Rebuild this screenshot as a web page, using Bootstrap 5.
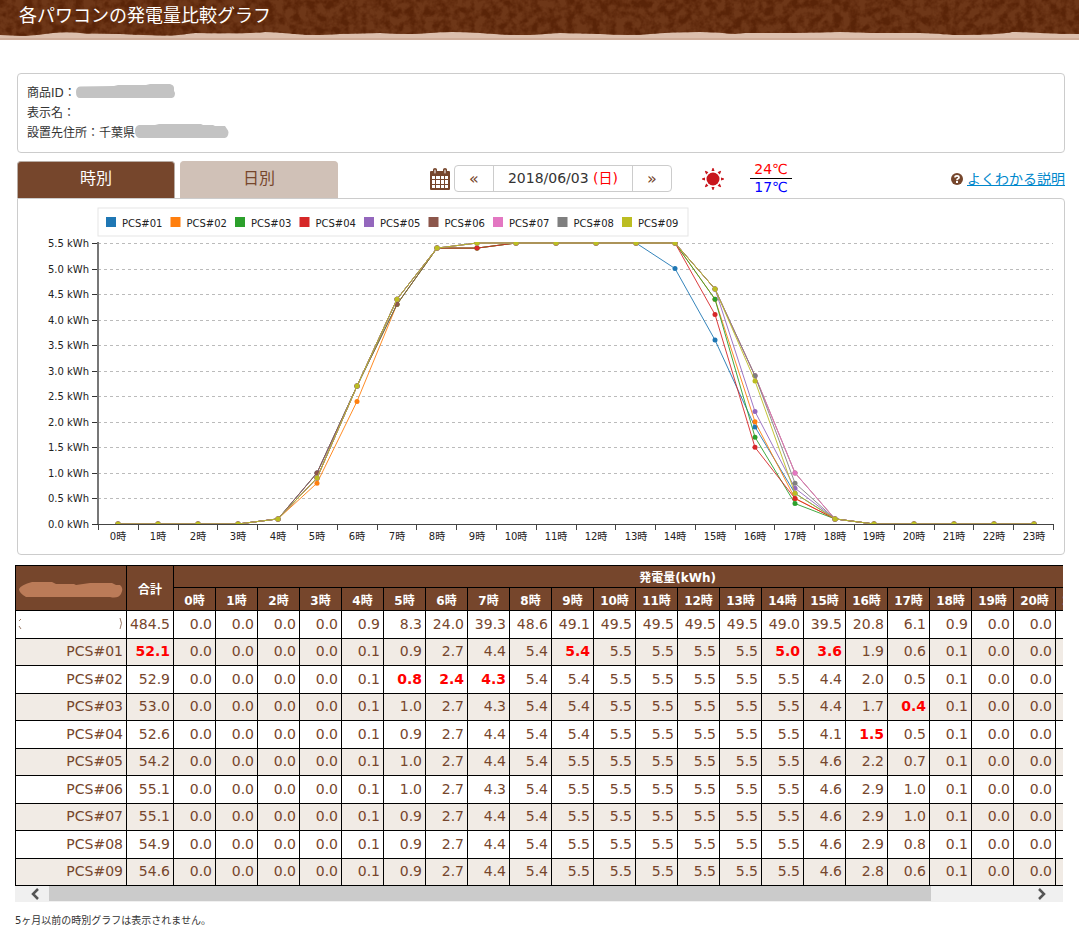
<!DOCTYPE html>
<html lang="ja">
<head>
<meta charset="utf-8">
<meta name="viewport" content="width=device-width, initial-scale=1">
<title>各パワコンの発電量比較グラフ</title>
<link href="https://cdn.jsdelivr.net/npm/bootstrap@5.3.0/dist/css/bootstrap.min.css" rel="stylesheet">
<style>
:root { --brown: #76462c; --line: #ccc; }
body { font-family: "DejaVu Sans", "Noto Sans CJK JP", sans-serif; font-size: 12px; line-height: 20px; color: #333; }
.page-head { height: 40px; }
.page-head svg { inset: 0; }
.page-head h1 { font-size: 18px; line-height: 32px; font-weight: 400; padding-left: 19px; }
.page-main { padding: 33px 14px 0 17px; }
.info-box { border: 1px solid var(--line); border-radius: 4px; padding: 9px 9px; }
.info-box dt { font-weight: 400; }
.hidden-value { height: 16px; }
.toolbar { margin-top: 8px; height: 37px; }
.tabs { gap: 5px; }
.tabs button { width: 158px; font-size: 16px; line-height: 32px; border: 1px solid #d0c1b7; border-bottom: 0; border-radius: 4px 4px 0 0; background: #d0c1b7; color: var(--brown); padding: 0 0 2px; }
.tabs button.active { background: var(--brown); border-color: #b8aca4; color: #fff; }
.period { margin-left: 92px; }
.period, .help-link { padding-bottom: 2px; }
.day-nav { border: 1px solid var(--line); border-radius: 4px; height: 27px; margin-left: 4px; font-size: 14px; line-height: 25px; }
.day-nav button { width: 38px; border: 0; background: none; color: var(--brown); padding: 0; font-size: 16px; line-height: 22px; }
.day-nav .day { width: 140px; border: solid var(--line); border-width: 0 1px; text-align: center; }
.holiday { color: #f00; }
.temps { width: 42px; margin-left: 20px; font-size: 14px; line-height: 17px; text-align: center; }
.temps .hi { color: #f00; border-bottom: 1px solid #000; }
.temps .lo { color: #00f; }
.help { color: #0088cc; font-size: 14px; }
.chart-box { border: 1px solid var(--line); border-radius: 0 4px 4px 4px; }
.chart-box svg { width: 100%; height: auto; }
.chart-box text { font-size: 10px; fill: #222; }
.sheet { margin: 10px 2px 0 -2px; }
.sheet-view { overflow-x: auto; overflow-y: hidden; scrollbar-width: none; }
.sheet-view::-webkit-scrollbar { display: none; }
.power { table-layout: fixed; width: 1167px; border-collapse: collapse; color: var(--brown); }
.power th, .power td { border: 1px solid #000; }
.power thead th { background: var(--brown); color: #fff; text-align: center; font-size: 12px; line-height: 18px; padding: 3px 0 0; height: 22px; }
.power thead tr + tr th { height: 23px; padding-top: 4px; line-height: 18px; }
.power tbody tr { height: 28px; }
.power tbody tr:nth-child(even) { height: 27px; background: #f1ebe5; }
.power tbody th, .power tbody td { font-size: 14px; line-height: 22px; font-weight: 400; text-align: right; padding: 0 3px 2px 0; white-space: nowrap; }
.power tbody td.low { color: #f00; font-weight: 700; }
.power tbody td + td { padding-right: 3px; }
.scroller { height: 16px; background: #f0f0f0; }
.scroller button { width: 34px; border: 0; background: none; padding: 0; line-height: 0; }
.track { height: 15px; }
.thumb { width: 90%; background: #cbcbcb; }
.note { font-size: 10px; line-height: 16px; margin: 11px 0 0 -2px; }
</style>
</head>
<body>
<header class="page-head position-relative">
  <svg class="position-absolute w-100 h-100" viewBox="0 0 1079 40" preserveAspectRatio="none" aria-hidden="true">
    <defs>
      <filter id="grain" x="0" y="0" width="100%" height="100%" color-interpolation-filters="sRGB">
        <feTurbulence type="fractalNoise" baseFrequency="0.12" numOctaves="3" seed="4"/>
        <feColorMatrix values="0 0 0 0 .35  0 0 0 0 .14  0 0 0 0 .03  3 0 0 0 -1.1"/>
        <feComposite in2="SourceGraphic" operator="in" result="spots"/>
        <feMerge><feMergeNode in="SourceGraphic"/><feMergeNode in="spots"/></feMerge>
      </filter>
    </defs>
    <rect width="1079" height="40" fill="#dcbfad"/>
    <rect y="38" width="1079" height="2" fill="#d0ae9a"/>
    <path filter="url(#grain)" fill="#6e3718" d="M0 0H1079V34Q1060 34 1040 33T1012 32Q1000 35 955 35Q930 33 920 33H870Q850 32 840 32T795 33H745L735 34Q715 32 700 32Q670 32 650 34T600 34L560 33L530 35Q500 35 480 33Q450 31 430 33T380 33L340 34Q315 36 295 34T265 32Q245 34 195 33Q175 36 160 35.500T120 34L85 33.500Q62 31 45 34T0 35Z"/>
  </svg>
  <h1 class="position-relative text-white m-0">各パワコンの発電量比較グラフ</h1>
</header>

<main class="page-main">
  <dl class="info-box m-0">
    <div class="d-flex"><dt>商品ID：</dt><dd class="m-0"><svg class="hidden-value d-block" width="100" height="16" viewBox="0 0 100 16" aria-label="非表示"><path fill="#c3c3c3" d="M4 3.500L38 3L42 2L70 2L74 1H94Q98 2 98 5V8Q100 10 98 14L96 15H4Q0 15 0 9Q0 4 4 3.500Z"/></svg></dd></div>
    <div class="d-flex"><dt>表示名：</dt><dd class="m-0"></dd></div>
    <div class="d-flex"><dt>設置先住所：</dt><dd class="m-0 d-flex">千葉県<svg class="hidden-value d-block" width="94" height="16" viewBox="0 0 94 16" aria-label="非表示"><path fill="#c3c3c3" d="M4 2H20L24 1H66L68 2H78L80 3H90L92 6Q95 9 92 14L90 15H4Q0 14 0 8Q0 3 4 2Z"/></svg></dd></div>
  </dl>

  <div class="toolbar d-flex">
    <div class="tabs d-flex" role="tablist">
      <button type="button" class="active" role="tab" aria-selected="true">時別</button>
      <button type="button" role="tab" aria-selected="false">日別</button>
    </div>
    <div class="period d-flex align-items-center">
      <svg width="20" height="22" viewBox="0 0 20 22" aria-hidden="true">
        <path fill="#76462c" d="M1 3H3V1.500Q3 0 5 0T7 1.500V3H13V1.500Q13 0 15 0T17 1.500V3H19Q20 3 20 4V21Q20 22 19 22H1Q0 22 0 21V4Q0 3 1 3Z"/>
        <path fill="#fff" d="M4.500 2Q5 1 5.500 2V5Q5 6 4.500 5ZM14.500 2Q15 1 15.500 2V5Q15 6 14.500 5ZM2 8H5V11H2ZM6 8H10V11H6ZM11 8H14V11H11ZM15 8H18V11H15ZM2 12H5V16H2ZM6 12H10V16H6ZM11 12H14V16H11ZM15 12H18V16H15ZM2 17H5V20H2ZM6 17H10V20H6ZM11 17H14V20H11ZM15 17H18V20H15Z"/>
      </svg>
      <div class="day-nav d-flex">
        <button type="button" aria-label="前の日">«</button>
        <div class="day">2018/06/03 <span class="holiday">(日)</span></div>
        <button type="button" aria-label="次の日">»</button>
      </div>
      <svg id="sun" class="ms-4" width="34" height="24" viewBox="-17 -12 34 24" role="img" aria-label="晴れ"><g fill="#c8161d"><circle r="6.500"/></g></svg>
      <div class="temps"><div class="hi">24℃</div><div class="lo">17℃</div></div>
    </div>
    <div class="help-link ms-auto d-flex align-items-center gap-1">
      <svg width="12" height="12" viewBox="0 0 12 12" aria-hidden="true"><circle cx="6" cy="6" r="6" fill="#76462c"/><path d="M4 4.500Q4 2.800 6 2.800T8 4.400Q8 5.300 6.900 5.800Q6 6.200 6 7.200" fill="none" stroke="#fff" stroke-width="1.700"/><rect x="5" y="8" width="2" height="2" fill="#fff"/></svg>
      <a class="help" href="#">よくわかる説明</a>
    </div>
  </div>

  <section class="chart-box">
    <svg id="chart" class="d-block" viewBox="0 0 1046 355" role="img" aria-label="時別発電量"></svg>
  </section>

  <section class="sheet">
    <div class="sheet-view" id="view">
      <table class="power">
        <colgroup><col style="width:111px"><col style="width:47px"><col span="24" style="width:42px"></colgroup>
        <thead>
          <tr>
            <th rowspan="2"><svg class="d-block mx-auto" width="106" height="18" viewBox="0 0 106 18" aria-label="非表示"><path fill="#bb7b58" d="M1 8Q3 4 14 1H34L38 3H56L58 4L72 2H94L98 4H102Q106 7 103 13Q100 18 92 16H8Q1 12 1 8Z"/></svg></th>
            <th rowspan="2">合計</th>
            <th colspan="24">発電量(kWh)</th>
          </tr>
          <tr id="hours"></tr>
        </thead>
        <tbody id="rows"></tbody>
      </table>
    </div>
    <div class="scroller d-flex">
      <button type="button" id="left" aria-label="左へ"><svg width="18" height="12" viewBox="0 0 18 12"><path d="M15 1L10 6L15 11" fill="none" stroke="#555" stroke-width="2.500"/></svg></button>
      <div class="track flex-grow-1 d-flex"><div class="thumb"></div></div>
      <button type="button" id="right" aria-label="右へ"><svg width="18" height="12" viewBox="0 0 18 12"><path d="M2 1L7 6L2 11" fill="none" stroke="#555" stroke-width="2.500"/></svg></button>
    </div>
  </section>
  <p class="note">5ヶ月以前の時別グラフは表示されません。</p>
</main>

<script src="https://cdn.jsdelivr.net/npm/bootstrap@5.3.0/dist/js/bootstrap.bundle.min.js"></script>
<script>
// Hours 4 to 18 of each unit; every other hour is 0.0.
const units = [
  ['52.1', [.1,.9,2.7,4.4,5.4,5.4,5.5,5.5,5.5,5.5,5.0,3.6,1.9,.6,.1], [9,14,15], '#1f77b4'],
  ['52.9', [.1,.8,2.4,4.3,5.4,5.4,5.5,5.5,5.5,5.5,5.5,4.4,2.0,.5,.1], [5,6,7], '#ff7f0e'],
  ['53.0', [.1,1.0,2.7,4.3,5.4,5.4,5.5,5.5,5.5,5.5,5.5,4.4,1.7,.4,.1], [17], '#2ca02c'],
  ['52.6', [.1,.9,2.7,4.4,5.4,5.4,5.5,5.5,5.5,5.5,5.5,4.1,1.5,.5,.1], [16], '#d62728'],
  ['54.2', [.1,1.0,2.7,4.4,5.4,5.5,5.5,5.5,5.5,5.5,5.5,4.6,2.2,.7,.1], [], '#9467bd'],
  ['55.1', [.1,1.0,2.7,4.3,5.4,5.5,5.5,5.5,5.5,5.5,5.5,4.6,2.9,1.0,.1], [], '#8c564b'],
  ['55.1', [.1,.9,2.7,4.4,5.4,5.5,5.5,5.5,5.5,5.5,5.5,4.6,2.9,1.0,.1], [], '#e377c2'],
  ['54.9', [.1,.9,2.7,4.4,5.4,5.5,5.5,5.5,5.5,5.5,5.5,4.6,2.9,.8,.1], [], '#7f7f7f'],
  ['54.6', [.1,.9,2.7,4.4,5.4,5.5,5.5,5.5,5.5,5.5,5.5,4.6,2.8,.6,.1], [], '#bcbd22']
];
const total = [.9,8.3,24.0,39.3,48.6,49.1,49.5,49.5,49.5,49.5,49.0,39.5,20.8,6.1,.9];
const day = v => [0,0,0,0, ...v, 0,0,0,0,0];
const name = i => 'PCS#0' + (i + 1);
const cells = (v, low) => day(v).map((n, h) => `<td${low.includes(h) ? ' class="low"' : ''}>${n.toFixed(1)}</td>`).join('');

document.getElementById('hours').innerHTML = day(total).map((_, h) => `<th>${h}時</th>`).join('');
// The plant's own name is masked; only the rims of its brackets remain.
const masked = '<svg class="d-block" width="108" height="14" viewBox="0 0 108 14" aria-label="非表示"><path d="M5 2L3 4M3 9L5 12M104 1Q107 6 104 12" fill="none" stroke="#9b7a67"/></svg>';
document.getElementById('rows').innerHTML =
  `<tr><th>${masked}</th><td>484.5</td>${cells(total, [])}</tr>` +
  units.map((u, i) => `<tr><th>${name(i)}</th><td${i ? '' : ' class="low"'}>${u[0]}</td>${cells(u[1], u[2])}</tr>`).join('');

// Chart
const L = 80, R = 1035, T = 44, B = 325, step = (R - L) / 24;
const px = h => Math.ceil(L + step * (h + 1 / 2)), py = v => B - v * (B - T) / 5.5;
let s = '<defs><clipPath id="plot"><rect x="80" y="43" width="955" height="282"/></clipPath></defs>';
for (let k = 0; k <= 11; k++) {
  const y = Math.round(py(k / 2)) + 1 / 2;
  if (k) s += `<path d="M${L} ${y}H${R}" stroke="#bbb" stroke-dasharray="3 3"/>`;
  s += `<path d="M74 ${y}H${L}" stroke="#333"/><text x="71" y="${y + 3}" text-anchor="end">${(k / 2).toFixed(1)} kWh</text>`;
}
s += `<path d="M${L} ${T - 1}V${B}" stroke="#777" stroke-width="2"/><path d="M${L} ${B + 1 / 2}H${R}" stroke="#444"/>`;
for (let h = 0; h <= 24; h++) {
  const x = Math.round(L + step * h) + 1 / 2;
  s += `<path d="M${x} ${B}V${B + 6}" stroke="#444"/>`;
  if (h < 24) s += `<text x="${px(h)}" y="341" text-anchor="middle">${h}時</text>`;
}
s += '<g clip-path="url(#plot)">';
units.forEach(u => {
  const p = day(u[1]).map((v, h) => [px(h), py(v)]);
  s += `<polyline points="${p.join(' ')}" fill="none" stroke="${u[3]}" opacity=".9"/>` +
    p.map(q => `<circle cx="${q[0]}" cy="${q[1]}" r="2.500" fill="${u[3]}"/>`).join('');
});
s += '</g><rect x="80" y="9" width="590" height="28" fill="#fff" stroke="#e5e5e5"/>';
units.forEach((u, i) => {
  const x = 88 + i * 516 / 8;
  s += `<rect x="${x}" y="18" width="10" height="10" fill="${u[3]}"/><text x="${x + 16}" y="28">${name(i)}</text>`;
});
document.getElementById('chart').innerHTML = s;

// Eight rays round the sun
const disc = document.querySelector('#sun g');
let rays = '';
for (let a = 0; a < 360; a += 45) rays += `<path d="M-1.500 -8L-.5 -11H.5L1.500 -8Z" transform="rotate(${a})"/>`;
disc.innerHTML += rays;

const view = document.getElementById('view');
document.getElementById('left').onclick = () => view.scrollLeft -= 42;
document.getElementById('right').onclick = () => view.scrollLeft += 42;
</script>
</body>
</html>
